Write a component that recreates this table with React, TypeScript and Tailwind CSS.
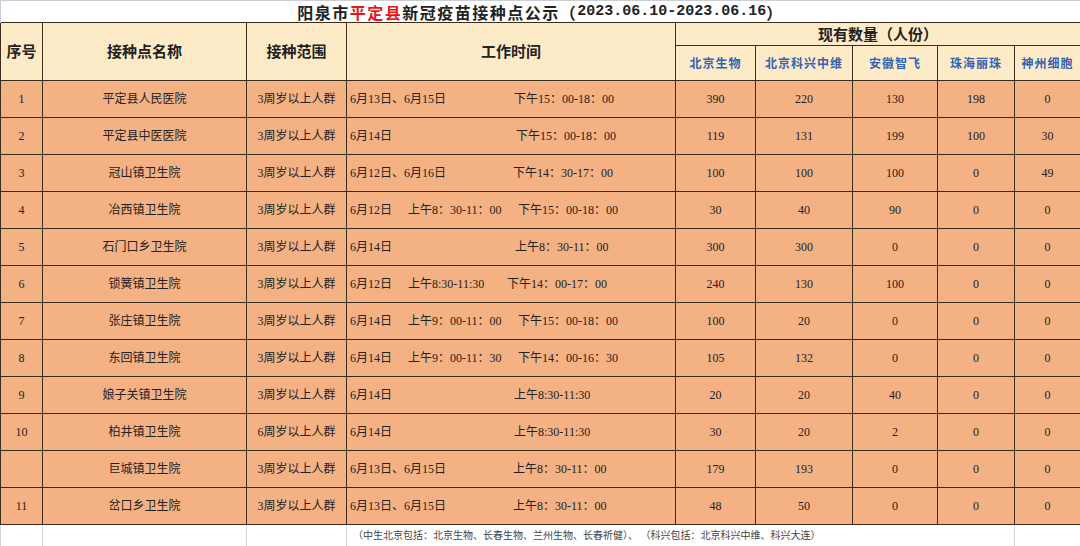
import React from "react";

type Row = {
  no: string;
  name: string;
  range: string;
  date: string;
  times: { text: string; pad: string }[];
  counts: number[];
};

const ROWS: Row[] = [
  { no: "1", name: "平定县人民医院", range: "3周岁以上人群", date: "6月13日、6月15日", times: [{ text: "下午15：00-18：00", pad: "pl-[164px]" }], counts: [390, 220, 130, 198, 0] },
  { no: "2", name: "平定县中医医院", range: "3周岁以上人群", date: "6月14日", times: [{ text: "下午15：00-18：00", pad: "pl-[166px]" }], counts: [119, 131, 199, 100, 30] },
  { no: "3", name: "冠山镇卫生院", range: "3周岁以上人群", date: "6月12日、6月16日", times: [{ text: "下午14：30-17：00", pad: "pl-[163px]" }], counts: [100, 100, 100, 0, 49] },
  {
    no: "4",
    name: "冶西镇卫生院",
    range: "3周岁以上人群",
    date: "6月12日",
    times: [
      { text: "上午8：30-11：00", pad: "pl-[58px]" },
      { text: "下午15：00-18：00", pad: "pl-[168px]" }
    ],
    counts: [30, 40, 90, 0, 0]
  },
  { no: "5", name: "石门口乡卫生院", range: "3周岁以上人群", date: "6月14日", times: [{ text: "上午8：30-11：00", pad: "pl-[165px]" }], counts: [300, 300, 0, 0, 0] },
  {
    no: "6",
    name: "锁簧镇卫生院",
    range: "3周岁以上人群",
    date: "6月12日",
    times: [
      { text: "上午8:30-11:30", pad: "pl-[58px]" },
      { text: "下午14：00-17：00", pad: "pl-[157px]" }
    ],
    counts: [240, 130, 100, 0, 0]
  },
  {
    no: "7",
    name: "张庄镇卫生院",
    range: "3周岁以上人群",
    date: "6月14日",
    times: [
      { text: "上午9：00-11：00", pad: "pl-[58px]" },
      { text: "下午15：00-18：00", pad: "pl-[168px]" }
    ],
    counts: [100, 20, 0, 0, 0]
  },
  {
    no: "8",
    name: "东回镇卫生院",
    range: "3周岁以上人群",
    date: "6月14日",
    times: [
      { text: "上午9：00-11：30", pad: "pl-[58px]" },
      { text: "下午14：00-16：30", pad: "pl-[168px]" }
    ],
    counts: [105, 132, 0, 0, 0]
  },
  { no: "9", name: "娘子关镇卫生院", range: "3周岁以上人群", date: "6月14日", times: [{ text: "上午8:30-11:30", pad: "pl-[164px]" }], counts: [20, 20, 40, 0, 0] },
  { no: "10", name: "柏井镇卫生院", range: "6周岁以上人群", date: "6月14日", times: [{ text: "上午8:30-11:30", pad: "pl-[164px]" }], counts: [30, 20, 2, 0, 0] },
  { no: "", name: "巨城镇卫生院", range: "3周岁以上人群", date: "6月13日、6月15日", times: [{ text: "上午8：30-11：00", pad: "pl-[163px]" }], counts: [179, 193, 0, 0, 0] },
  { no: "11", name: "岔口乡卫生院", range: "3周岁以上人群", date: "6月13日、6月15日", times: [{ text: "上午8：30-11：00", pad: "pl-[163px]" }], counts: [48, 50, 0, 0, 0] }
];

const VACCINES = ["北京生物", "北京科兴中维", "安徽智飞", "珠海丽珠", "神州细胞"];

const cell = "border border-[#3b2c20] text-center align-middle";

export default function App() {
  return (
    <div className="w-[1080px] h-[546px] overflow-hidden bg-white font-['Liberation_Serif','Noto_Sans_CJK_SC',serif] text-[#222]">
      <table className="w-[1080px] table-fixed border-collapse">
        <colgroup>
          <col className="w-[42px]" />
          <col className="w-[204px]" />
          <col className="w-[100px]" />
          <col className="w-[329px]" />
          <col className="w-[80px]" />
          <col className="w-[97px]" />
          <col className="w-[85px]" />
          <col className="w-[77px]" />
          <col className="w-[66px]" />
        </colgroup>
        <tbody>
          <tr className="h-[22px]">
            <td colSpan={9} className="border border-b-0 border-[#c9cdd6] p-0">
              <div className="flex h-[21px] items-center justify-center whitespace-nowrap text-[16px] leading-none font-bold tracking-[1.5px] font-['Noto_Sans_CJK_SC',sans-serif]">
                <span>阳泉市</span>
                <span className="text-[#e8141b]">平定县</span>
                <span>新冠疫苗接种点公示（</span>
                <span className="font-['Liberation_Mono',monospace] text-[15px] tracking-normal">2023.06.10-2023.06.16</span>
                <span>）</span>
              </div>
            </td>
          </tr>
          <tr className="h-[23px] bg-[#fdebc8]">
            <td rowSpan={2} className={`${cell} text-[15px] font-bold font-['Noto_Sans_CJK_SC',sans-serif]`}>
              序号
            </td>
            <td rowSpan={2} className={`${cell} text-[15px] font-bold font-['Noto_Sans_CJK_SC',sans-serif]`}>
              接种点名称
            </td>
            <td rowSpan={2} className={`${cell} text-[15px] font-bold font-['Noto_Sans_CJK_SC',sans-serif]`}>
              接种范围
            </td>
            <td rowSpan={2} className={`${cell} text-[15px] font-bold font-['Noto_Sans_CJK_SC',sans-serif]`}>
              工作时间
            </td>
            <td colSpan={5} className={`${cell} text-[15px] leading-[20px] font-bold font-['Noto_Sans_CJK_SC',sans-serif]`}>
              现有数量（人份）
            </td>
          </tr>
          <tr className="h-[35px] bg-[#fdebc8]">
            {VACCINES.map((v) => (
              <td key={v} className={`${cell} text-[12px] font-bold tracking-[1px] text-[#3462b4] font-['Noto_Sans_CJK_SC',sans-serif]`}>
                {v}
              </td>
            ))}
          </tr>
          {ROWS.map((row, i) => (
            <tr key={i} className="h-[37px] bg-[#f4b184] text-[12px] leading-[16px]">
              <td className={cell}>{row.no}</td>
              <td className={cell}>{row.name}</td>
              <td className={cell}>{row.range}</td>
              <td className="border border-[#3b2c20] align-middle pl-[3px]">
                <div className="grid whitespace-nowrap">
                  <span className="col-start-1 row-start-1">{row.date}</span>
                  {row.times.map((t) => (
                    <span key={t.text} className={`col-start-1 row-start-1 ${t.pad}`}>
                      {t.text}
                    </span>
                  ))}
                </div>
              </td>
              {row.counts.map((c, j) => (
                <td key={j} className={cell}>
                  {c}
                </td>
              ))}
            </tr>
          ))}
          <tr className="h-[22px] bg-white">
            <td className="border border-[#d3d7df]" />
            <td className="border border-[#d3d7df]" />
            <td className="border border-[#d3d7df]" />
            <td colSpan={5} className="border border-[#d3d7df] pl-[6px] align-middle text-[10px] leading-[14px] text-[#444] whitespace-nowrap">
              （中生北京包括：北京生物、长春生物、兰州生物、长春祈健）、 （科兴包括：北京科兴中维、科兴大连）
            </td>
            <td className="border border-[#d3d7df]" />
          </tr>
        </tbody>
      </table>
    </div>
  );
}
